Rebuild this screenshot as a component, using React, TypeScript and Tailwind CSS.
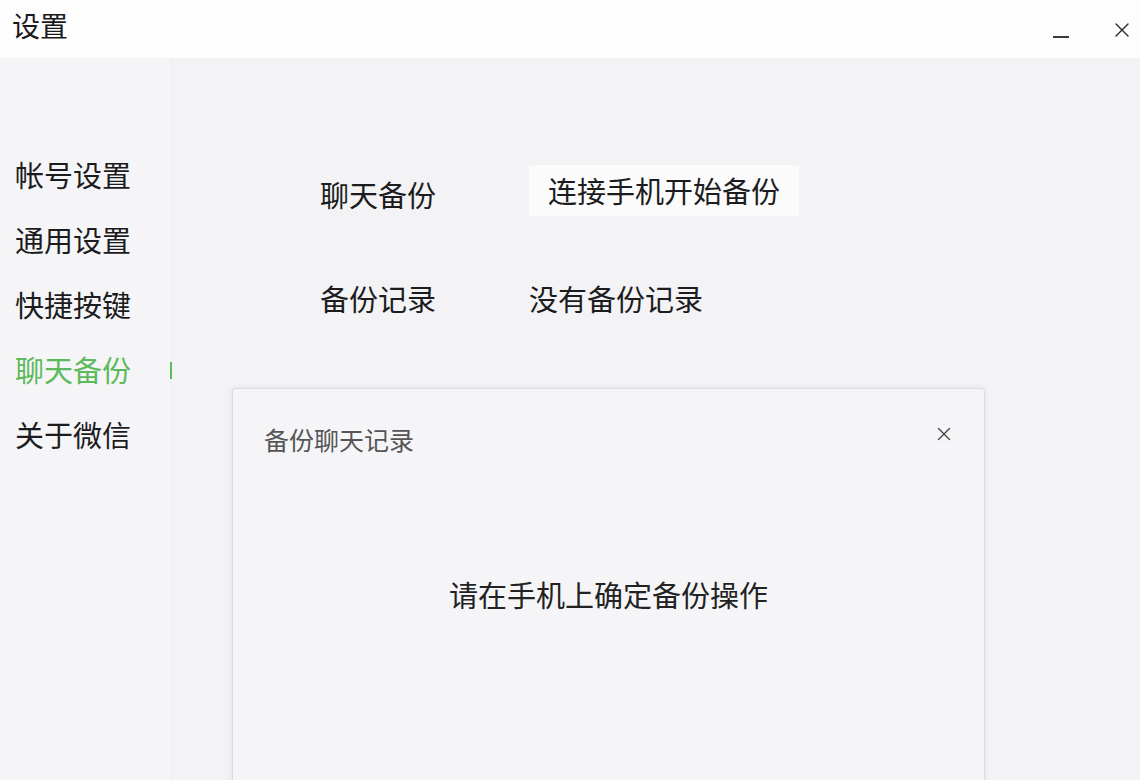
import { X } from 'lucide-react'

const navItems = ['帐号设置', '通用设置', '快捷按键', '聊天备份', '关于微信']

function Sidebar() {
    return (
        <div className="w-[172px] shrink-0 border-r border-[#ebebee] bg-[#f5f5f7] pt-[84px]">
            {navItems.map((item) => {
                const active = item === '聊天备份'
                return (
                    <div key={item} className="relative flex h-[65px] items-center pl-[15px]">
                        <span className={active ? 'text-[29px] text-[#5cba5c]' : 'text-[29px] text-[#1c1c1e]'}>
                            {item}
                        </span>
                        {active && (
                            <div className="absolute right-[-1px] top-[25px] h-[17px] w-[2px] bg-[#5cba5c]" />
                        )}
                    </div>
                )
            })}
        </div>
    )
}

function BackupDialog() {
    return (
        <div className="absolute left-[60px] top-[330px] h-[420px] w-[753px] rounded-t-[3px] border border-[#dcdcdf] bg-[#f5f5f7] shadow-[0_0_6px_rgba(0,0,0,0.08)]">
            <div className="flex items-center justify-between pl-[31px] pr-[29px] pt-[32px]">
                <span className="text-[25px] text-[#555558]">备份聊天记录</span>
                <X className="mb-[12px] h-[22px] w-[22px] text-[#444]" strokeWidth={1.5} />
            </div>
            <div className="mt-[114px] text-center text-[29px] text-[#222]">请在手机上确定备份操作</div>
        </div>
    )
}

export default function App() {
    return (
        <div
            className="flex h-[780px] w-[1140px] flex-col overflow-hidden bg-[#f3f3f5]"
            style={{ fontFamily: '"Noto Sans CJK SC", "Noto Sans", sans-serif' }}
        >
            {/* Title bar */}
            <div className="flex h-[58px] shrink-0 items-start justify-between bg-[#fdfdfe] pl-[12px]">
                <span className="pt-[6px] text-[28px] leading-[38px] text-[#1a1a1c]">设置</span>
                <div className="flex items-center gap-[41px] pr-[6px] pt-[18px]">
                    <div className="mt-[14px] h-[1.5px] w-[16px] bg-[#3a3a3c]" />
                    <X className="h-[24px] w-[24px] text-[#2a2a2c]" strokeWidth={1.4} />
                </div>
            </div>

            <div className="flex flex-1">
                <Sidebar />
                <div className="relative flex-1">
                    <div className="flex flex-col pl-[148px] pt-[107px]">
                        <div className="flex h-[51px] items-center">
                            <span className="mt-[8px] w-[209px] text-[29px] text-[#1c1c1e]">聊天备份</span>
                            <div className="flex h-[51px] w-[270px] items-center justify-center bg-[#fbfbfc] text-[29px] text-[#1c1c1e]">
                                连接手机开始备份
                            </div>
                        </div>
                        <div className="mt-[57px] flex h-[52px] items-center">
                            <span className="w-[209px] text-[29px] text-[#1c1c1e]">备份记录</span>
                            <span className="text-[29px] text-[#1c1c1e]">没有备份记录</span>
                        </div>
                    </div>
                    <BackupDialog />
                </div>
            </div>
        </div>
    )
}
